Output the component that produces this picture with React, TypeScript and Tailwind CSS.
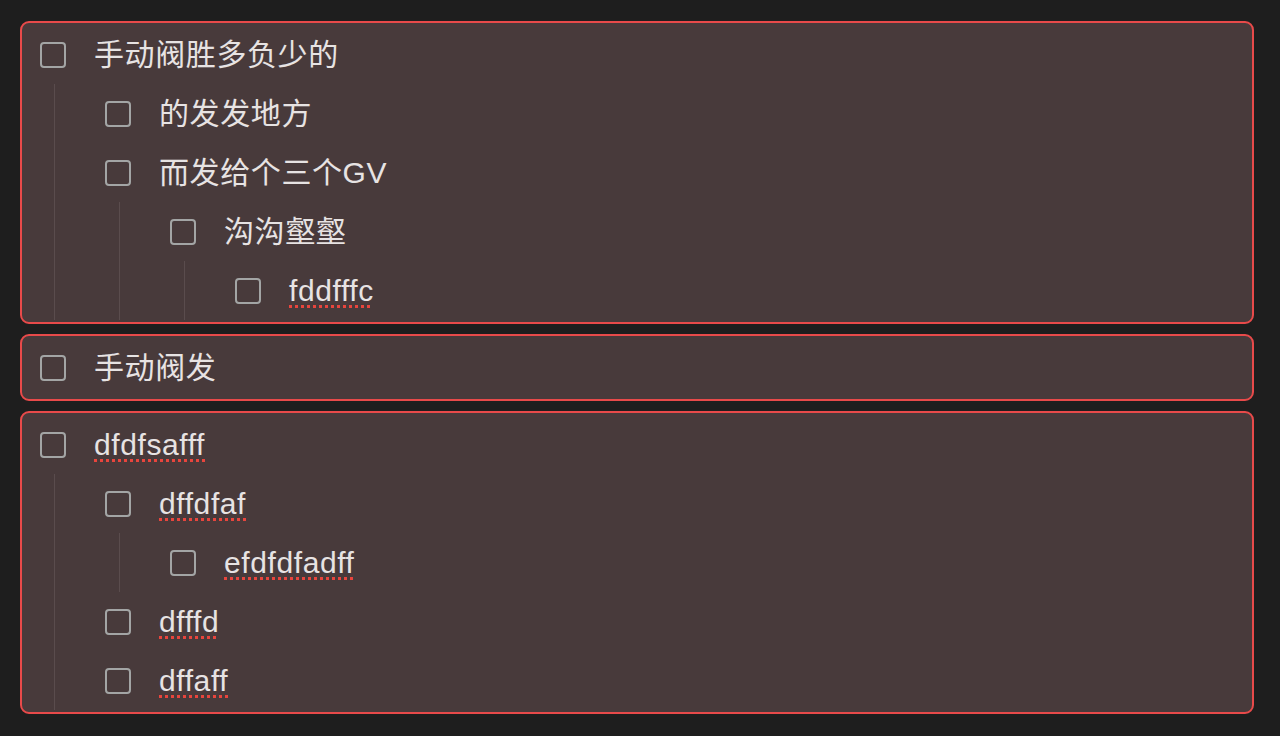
import React from 'react';

type TaskNode = {
  id: string;
  text: string;
  spell?: boolean;
  children?: TaskNode[];
};

const groups: TaskNode[] = [
  {
    id: 'a',
    text: '手动阀胜多负少的',
    children: [
      { id: 'a1', text: '的发发地方' },
      {
        id: 'a2',
        text: '而发给个三个GV',
        children: [
          {
            id: 'a21',
            text: '沟沟壑壑',
            children: [{ id: 'a211', text: 'fddfffc', spell: true }],
          },
        ],
      },
    ],
  },
  { id: 'b', text: '手动阀发' },
  {
    id: 'c',
    text: 'dfdfsafff',
    spell: true,
    children: [
      {
        id: 'c1',
        text: 'dffdfaf',
        spell: true,
        children: [{ id: 'c11', text: 'efdfdfadff', spell: true }],
      },
      { id: 'c2', text: 'dfffd', spell: true },
      { id: 'c3', text: 'dffaff', spell: true },
    ],
  },
];

const TaskItem: React.FC<{ node: TaskNode }> = ({ node }) => {
  return (
    <div>
      <div className="flex h-[59px] items-center">
        <span className="ml-[18px] h-[26px] w-[26px] shrink-0 rounded-[4px] border-2 border-[#a3a5a5]" />
        <span
          className={`ml-[28px] text-[30px] leading-none tracking-[0.6px] text-[#e7e3e3] ${
            node.spell
              ? 'underline decoration-dotted decoration-[#e8453d] decoration-[3px] underline-offset-[4px]'
              : ''
          }`}
        >
          {node.text}
        </span>
      </div>
      {node.children && (
        <div className="ml-[32px] border-l border-[#5a4c4d] pl-[32px]">
          {node.children.map((child) => (
            <TaskItem key={child.id} node={child} />
          ))}
        </div>
      )}
    </div>
  );
};

export default function App() {
  return (
    <div
      className="min-h-[736px] bg-[#1e1e1e] pb-[20px] pl-[20px] pr-[26px] pt-[21px]"
      style={{ fontFamily: '"Liberation Sans", "Noto Sans CJK SC", sans-serif' }}
    >
      <div className="flex flex-col gap-[10px]">
        {groups.map((group) => (
          <div
            key={group.id}
            className="overflow-hidden rounded-[9px] border-2 border-[#e84a4a] bg-[#483a3b] py-[2px]"
          >
            <TaskItem node={group} />
          </div>
        ))}
      </div>
    </div>
  );
}
